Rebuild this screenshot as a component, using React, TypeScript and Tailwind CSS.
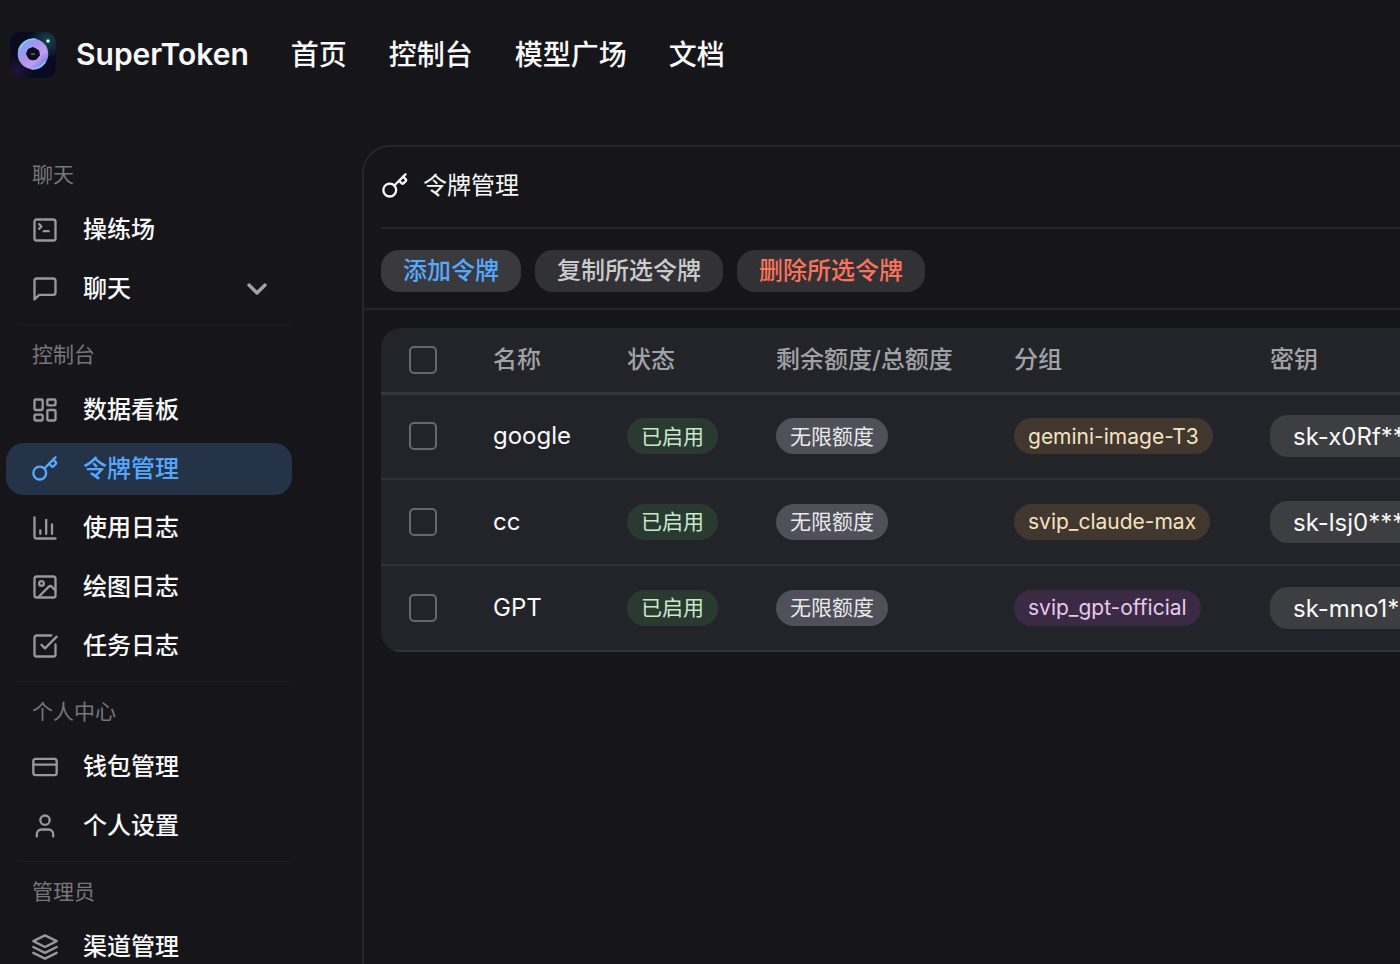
import {
    ChartColumn, CreditCard, Image, Key, LayoutDashboard, SquareCheckBig, SquareTerminal, User,
} from "lucide-react";
import type { ComponentType } from "react";

interface IconProps {
    size?: number;
    strokeWidth?: number;
    className?: string;
}

interface NavItem {
    label: string;
    icon: ComponentType<IconProps>;
    active?: boolean;
    expandable?: boolean;
}

interface Token {
    name: string;
    group: string;
    tone: "amber" | "purple";
    secret: string;
}

const TOP_LINKS = ["首页", "控制台", "模型广场", "文档"];

const NAV_GROUPS: { title: string; items: NavItem[] }[] = [
    {
        title: "聊天",
        items: [
            { label: "操练场", icon: SquareTerminal },
            { label: "聊天", icon: ChatIcon, expandable: true },
        ],
    },
    {
        title: "控制台",
        items: [
            { label: "数据看板", icon: LayoutDashboard },
            { label: "令牌管理", icon: Key, active: true },
            { label: "使用日志", icon: ChartColumn },
            { label: "绘图日志", icon: Image },
            { label: "任务日志", icon: SquareCheckBig },
        ],
    },
    {
        title: "个人中心",
        items: [
            { label: "钱包管理", icon: CreditCard },
            { label: "个人设置", icon: User },
        ],
    },
    {
        title: "管理员",
        items: [{ label: "渠道管理", icon: LayersIcon }],
    },
];

const TOKENS: Token[] = [
    { name: "google", group: "gemini-image-T3", tone: "amber", secret: "sk-x0Rf**********" },
    { name: "cc", group: "svip_claude-max", tone: "amber", secret: "sk-lsj0**********" },
    { name: "GPT", group: "svip_gpt-official", tone: "purple", secret: "sk-mno1**********" },
];

const GROUP_TONES = {
    amber: "bg-[#42372e] text-[#f4e3c3]",
    purple: "bg-[#3a2a44] text-[#e9c8ef]",
};

export default function App() {
    return (
        <div className="flex h-screen flex-col overflow-hidden bg-[#16161a] font-[Inter,'Noto_Sans_CJK_SC',sans-serif] text-[#f9f9f9]">
            <Header />
            <div className="flex min-h-0 flex-1">
                <Sidebar />
                <TokenPanel />
            </div>
        </div>
    );
}

function Header() {
    return (
        <header className="flex h-[109px] shrink-0 items-center pl-2.5">
            <a href="#home" className="flex items-center gap-5">
                <Logo />
                <span className="text-[30px] font-semibold">SuperToken</span>
            </a>
            <nav className="ml-[42px] flex items-center gap-[42px]">
                {TOP_LINKS.map(link => (
                    <a key={link} href="#" className="text-[28px] font-medium">{link}</a>
                ))}
            </nav>
        </header>
    );
}

function Sidebar() {
    return (
        <aside className="w-[292px] shrink-0 overflow-hidden pt-[52px] pl-1.5">
            {NAV_GROUPS.map((group, i) => (
                <section key={group.title}>
                    {i > 0 && <hr className="mt-[9px] mb-4 ml-3 border-[#1e1e22]" />}
                    <h2 className="mb-[15px] pl-[26px] text-[21px] leading-7 font-normal text-[#77777b]">{group.title}</h2>
                    <div className="flex flex-col gap-[7px]">
                        {group.items.map(item => <SidebarLink key={item.label} item={item} />)}
                    </div>
                </section>
            ))}
        </aside>
    );
}

function SidebarLink({ item }: { item: NavItem }) {
    const Icon = item.icon;
    return (
        <a
            href="#"
            className={`flex h-[52px] items-center rounded-[18px] pr-6 pl-[25px] text-[24px] font-medium ${item.active ? "bg-[#243348] text-[#54a9ff]" : ""}`}
        >
            <Icon size={28} strokeWidth={2} className={item.active ? "text-[#54a9ff]" : "text-[#98989c]"} />
            <span className="ml-6 flex-1">{item.label}</span>
            {item.expandable && (
                <svg width="22" height="14" viewBox="0 0 22 14" fill="none" className="text-[#a2a2a6]">
                    <path d="M3 3l8 8 8-8" stroke="currentColor" strokeWidth="3.4" strokeLinecap="round" strokeLinejoin="round" />
                </svg>
            )}
        </a>
    );
}

function TokenPanel() {
    return (
        <main className="mt-9 ml-[70px] min-w-0 flex-1 overflow-hidden rounded-tl-[28px] border-t-2 border-l-2 border-[#26262a]">
            <div className="pl-[17px]">
                <div className="flex h-[82px] items-center gap-3.5 border-b-2 border-[#26262a] pb-[3px]">
                    <Key size={28} strokeWidth={2} />
                    <h1 className="text-[24px] font-normal">令牌管理</h1>
                </div>
            </div>
            <div className="flex gap-3.5 border-b-2 border-[#26262a] pt-[21px] pb-4 pl-[17px]">
                <button className="h-[42px] rounded-[18px] bg-[#3a3a3e] px-[22px] text-[24px] leading-none font-medium text-[#54a9ff]">添加令牌</button>
                <button className="h-[42px] rounded-[18px] bg-[#323236] px-[22px] text-[24px] leading-none font-medium text-[#cbcbcd]">复制所选令牌</button>
                <button className="h-[42px] rounded-[18px] bg-[#323236] px-[22px] text-[24px] leading-none font-medium text-[#fc725a]">删除所选令牌</button>
            </div>
            <div className="pt-[18px] pl-[17px]">
                <TokenTable />
            </div>
        </main>
    );
}

function TokenTable() {
    return (
        <div className="overflow-hidden rounded-l-[20px] bg-[#232429]">
            <table className="w-full min-w-[1200px] table-fixed border-collapse text-left">
                <thead>
                    <tr className="h-[65px] border-b-3 border-[#35363b] text-[24px] text-[#a1a2a5]">
                        <th className="w-[95px] pl-7">
                            <Checkbox label="全选" />
                        </th>
                        <th className="w-[134px] pl-[17px] font-medium">名称</th>
                        <th className="w-[149px] pl-[17px] font-medium">状态</th>
                        <th className="w-[237px] pl-[17px] font-medium">剩余额度/总额度</th>
                        <th className="w-[256px] pl-[18px] font-medium">分组</th>
                        <th className="pl-[18px] font-medium">密钥</th>
                    </tr>
                </thead>
                <tbody>
                    {TOKENS.map(token => (
                        <tr key={token.name} className="h-[86px] border-b-2 border-[#313237] text-[24px]">
                            <td className="pl-7">
                                <Checkbox label={token.name} />
                            </td>
                            <td className="pl-[17px]">{token.name}</td>
                            <td className="pl-[17px]">
                                <Tag tone="bg-[#2b3a31] text-[#c9e8cc]">已启用</Tag>
                            </td>
                            <td className="pl-[17px]">
                                <Tag tone="bg-[#4f505a] text-[#e9eaec]">无限额度</Tag>
                            </td>
                            <td className="pl-[18px]">
                                <Tag tone={GROUP_TONES[token.tone]}>{token.group}</Tag>
                            </td>
                            <td className="pl-[18px]">
                                <input
                                    readOnly
                                    aria-label={`${token.name} 密钥`}
                                    value={token.secret}
                                    className="block h-[42px] w-[300px] rounded-[18px] bg-[#3d3e42] px-[23px] text-[24px] outline-none"
                                />
                            </td>
                        </tr>
                    ))}
                </tbody>
            </table>
        </div>
    );
}

function Tag({ tone, children }: { tone: string; children: string }) {
    return (
        <span className={`flex h-9 w-fit items-center rounded-full px-3.5 text-[21px] whitespace-nowrap ${tone}`}>{children}</span>
    );
}

function Checkbox({ label }: { label: string }) {
    return (
        <input
            type="checkbox"
            aria-label={label}
            className="block size-7 appearance-none rounded-[5px] border-2 border-[#67686d] checked:bg-[#54a9ff]"
        />
    );
}

function ChatIcon({ size = 24, strokeWidth = 2, className }: IconProps) {
    return (
        <svg width={size} height={size} viewBox="0 0 24 24" fill="none" stroke="currentColor" strokeWidth={strokeWidth} strokeLinecap="round" strokeLinejoin="round" className={className}>
            <path d="M21 15a2 2 0 0 1-2 2H7l-4 4V5a2 2 0 0 1 2-2h14a2 2 0 0 1 2 2z" />
        </svg>
    );
}

function LayersIcon({ size = 24, strokeWidth = 2, className }: IconProps) {
    return (
        <svg width={size} height={size} viewBox="0 0 24 24" fill="none" stroke="currentColor" strokeWidth={strokeWidth} strokeLinecap="round" strokeLinejoin="round" className={className}>
            <path d="M12 2 2 7l10 5 10-5z" />
            <path d="m2 17 10 5 10-5" />
            <path d="m2 12 10 5 10-5" />
        </svg>
    );
}

function Logo() {
    return (
        <svg width="46" height="46" viewBox="0 0 46 46" aria-hidden="true">
            <defs>
                <radialGradient id="sky" cx="0.82" cy="0.18" r="0.4">
                    <stop offset="0" stopColor="#174550" />
                    <stop offset="1" stopColor="#080b20" />
                </radialGradient>
                <radialGradient id="haze" cx="0.15" cy="0.85" r="0.35">
                    <stop offset="0" stopColor="#23143c" />
                    <stop offset="1" stopColor="#23143c" stopOpacity="0" />
                </radialGradient>
                <linearGradient id="ring" x1="0" y1="0" x2="1" y2="1">
                    <stop offset="0" stopColor="#7fa8f0" />
                    <stop offset="0.35" stopColor="#a993ee" />
                    <stop offset="0.7" stopColor="#bf9df2" />
                    <stop offset="1" stopColor="#7b7fe8" />
                </linearGradient>
            </defs>
            <rect width="46" height="46" rx="11" fill="url(#sky)" />
            <rect width="46" height="46" rx="11" fill="url(#haze)" />
            <circle cx="23" cy="22" r="10.800" fill="none" stroke="url(#ring)" strokeWidth="9" />
            <path d="M9 18A15 15 0 0 1 25 7.200M22 36.800A15 15 0 0 0 35 30" fill="none" stroke="#86c4f2" strokeWidth="1.800" strokeLinecap="round" />
            <path d="M23 15l6 3.400 1 5-5 4.600-6-1-3-5 2-5z" fill="#0b0d1d" />
            <path d="M21.500 22h3" stroke="#8e90b8" strokeWidth="1.200" strokeLinecap="round" />
            <circle cx="38" cy="9" r="1.700" fill="#d9f6f6" />
        </svg>
    );
}
